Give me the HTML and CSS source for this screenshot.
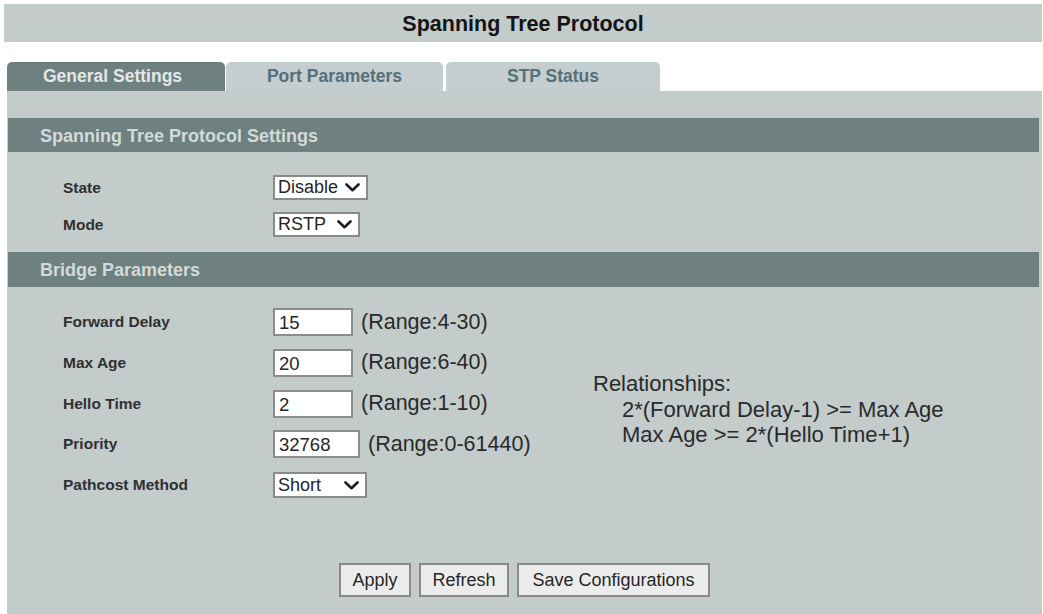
FILE: index.html
```html
<!DOCTYPE html>
<html>
<head>
<meta charset="utf-8">
<title>Spanning Tree Protocol</title>
<link rel="stylesheet" href="styles.css">
</head>
<body>
<div class="title">Spanning Tree Protocol</div>
<div class="tabs">
  <div class="tab tab-active tab-1">General Settings</div>
  <div class="tab tab-2">Port Parameters</div>
  <div class="tab tab-3">STP Status</div>
</div>
<div class="panel">
  <div class="section-header">Spanning Tree Protocol Settings</div>
  <div class="stp-rows">
    <div class="row">
      <div class="label">State</div>
      <div class="select select-state"><span class="select-text">Disable</span><svg class="chev" width="15" height="9" viewBox="0 0 15 9"><path d="M1.5 1.5 L7.5 7.2 L13.5 1.5" fill="none" stroke="#1e1e1e" stroke-width="2.6" stroke-linecap="round" stroke-linejoin="round"/></svg></div>
    </div>
    <div class="row">
      <div class="label">Mode</div>
      <div class="select select-mode"><span class="select-text">RSTP</span><svg class="chev" width="15" height="9" viewBox="0 0 15 9"><path d="M1.5 1.5 L7.5 7.2 L13.5 1.5" fill="none" stroke="#1e1e1e" stroke-width="2.6" stroke-linecap="round" stroke-linejoin="round"/></svg></div>
    </div>
  </div>
  <div class="section-header section-bridge">Bridge Parameters</div>
  <div class="bridge">
    <div class="bridge-rows">
      <div class="brow">
        <div class="label">Forward Delay</div>
        <input class="field" type="text" value="15">
        <span class="range">(Range:4-30)</span>
      </div>
      <div class="brow">
        <div class="label">Max Age</div>
        <input class="field" type="text" value="20">
        <span class="range">(Range:6-40)</span>
      </div>
      <div class="brow">
        <div class="label">Hello Time</div>
        <input class="field" type="text" value="2">
        <span class="range">(Range:1-10)</span>
      </div>
      <div class="brow">
        <div class="label">Priority</div>
        <input class="field field-wide" type="text" value="32768">
        <span class="range">(Range:0-61440)</span>
      </div>
      <div class="brow">
        <div class="label">Pathcost Method</div>
        <div class="select select-path"><span class="select-text">Short</span><svg class="chev" width="15" height="9" viewBox="0 0 15 9"><path d="M1.5 1.5 L7.5 7.2 L13.5 1.5" fill="none" stroke="#1e1e1e" stroke-width="2.6" stroke-linecap="round" stroke-linejoin="round"/></svg></div>
      </div>
    </div>
    <div class="relations">
      <div class="rel-title">Relationships:</div>
      <div class="rel-line">2*(Forward Delay-1) &gt;= Max Age</div>
      <div class="rel-line">Max Age &gt;= 2*(Hello Time+1)</div>
    </div>
  </div>
  <div class="buttons">
    <button class="btn btn-apply">Apply</button>
    <button class="btn btn-refresh">Refresh</button>
    <button class="btn btn-save">Save Configurations</button>
  </div>
</div>
</body>
</html>
```
FILE: styles.css
```css
html, body {
  margin: 0;
  padding: 0;
  background: #ffffff;
  font-family: "Liberation Sans", Arial, sans-serif;
  color: #222;
}
body {
  width: 1043px;
  height: 614px;
  overflow: hidden;
}
.title {
  margin: 4px 1px 0 4px;
  height: 38px;
  background: #c3cbcb;
  display: flex;
  align-items: center;
  justify-content: center;
  font-weight: bold;
  font-size: 21.5px;
  color: #141414;
  padding-top: 2px;
  box-sizing: border-box;
}
.tabs {
  display: flex;
  margin-top: 20px;
  padding-left: 7px;
  height: 29px;
}
.tab {
  height: 29px;
  display: flex;
  align-items: center;
  justify-content: center;
  font-weight: bold;
  font-size: 17.5px;
  border-radius: 5px 5px 0 0;
  background: #c4cdcf;
  color: #55707a;
  box-sizing: border-box;
}
.tab-1 {
  width: 218px;
  justify-content: flex-start;
  padding-left: 36px;
}
.tab-2 {
  width: 217px;
  margin-left: 1px;
}
.tab-3 {
  width: 214px;
  margin-left: 3px;
}
.tab-active {
  background: #6e807f;
  color: #e2e8e8;
}
.panel {
  margin: 0 1px 0 7px;
  height: 523px;
  background: #c3cbcb;
  padding-top: 27px;
  box-sizing: border-box;
}
.section-header {
  margin: 0 3px 0 1px;
  height: 34px;
  background: #6e807f;
  color: #d3dada;
  font-weight: bold;
  font-size: 18px;
  display: flex;
  align-items: center;
  padding-left: 32px;
  padding-top: 2px;
  box-sizing: border-box;
}
.section-bridge {
  height: 35px;
}
.stp-rows {
  display: flex;
  flex-direction: column;
  gap: 12px;
  padding: 23px 0 15px 56px;
}
.row {
  display: flex;
  align-items: center;
  height: 25px;
}
.label {
  width: 210px;
  flex: none;
  font-weight: bold;
  font-size: 15.5px;
  color: #303030;
}
.select {
  height: 25px;
  background: #ffffff;
  border: 2px solid #8a8a8a;
  box-sizing: border-box;
  display: flex;
  align-items: center;
  justify-content: space-between;
  padding: 0 6px 0 3px;
}
.select-text {
  font-size: 18px;
  color: #262626;
}
.chev {
  display: block;
  flex: none;
}
.select-state {
  width: 95px;
}
.select-mode {
  width: 87px;
}
.select-path {
  width: 94px;
  height: 26px;
}
.bridge {
  display: flex;
  padding: 21px 0 0 56px;
}
.bridge-rows {
  width: 530px;
  flex: none;
  display: flex;
  flex-direction: column;
  gap: 12.75px;
}
.brow {
  display: flex;
  align-items: center;
  height: 28px;
}
.field {
  width: 80px;
  height: 28px;
  box-sizing: border-box;
  border: 2px solid #8c8c8c;
  background: #ffffff;
  font-family: "Liberation Sans", Arial, sans-serif;
  font-size: 18.5px;
  color: #262626;
  padding: 2px 0 0 4px;
  margin: 0;
  outline: none;
}
.field-wide {
  width: 87px;
}
.range {
  margin-left: 8px;
  font-size: 21.5px;
  color: #2a2a2a;
}
.relations {
  padding-top: 63px;
  font-size: 22px;
  line-height: 25.5px;
  color: #2a2a2a;
}
.rel-line {
  padding-left: 29px;
}
.buttons {
  display: flex;
  justify-content: center;
  gap: 8px;
  margin-top: 64px;
}
.btn {
  height: 34px;
  box-sizing: border-box;
  border: 2px solid #8a8a8a;
  background: #ececec;
  font-family: "Liberation Sans", Arial, sans-serif;
  font-size: 18px;
  color: #262626;
  padding: 0;
  margin: 0;
}
.btn-apply {
  width: 72px;
}
.btn-refresh {
  width: 90px;
}
.btn-save {
  width: 193px;
}
```
